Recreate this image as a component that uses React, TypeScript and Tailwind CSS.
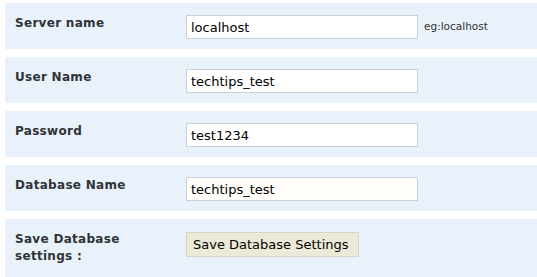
import React from "react";

const font = { fontFamily: '"DejaVu Sans", Verdana, sans-serif' };

function Row({
  label,
  children,
  className = "",
}: {
  label: React.ReactNode;
  children: React.ReactNode;
  className?: string;
}) {
  return (
    <div className={`flex items-start bg-[#e9f1fa] pl-[10px] pt-[12px] ${className}`}>
      <div className="w-[171px] shrink-0">
        <div className="w-[145px] text-[12px] font-bold leading-[17px] tracking-[0.3px] text-[#2f3338]">
          {label}
        </div>
      </div>
      <div className="flex items-center">{children}</div>
    </div>
  );
}

function Input({ value, cream = false }: { value: string; cream?: boolean }) {
  return (
    <input
      readOnly
      value={value}
      className={`h-[24px] w-[232px] border border-[#c9d1d9] px-[4px] text-[13px] text-black outline-none ${
        cream ? "bg-[#fffefa]" : "bg-white"
      }`}
      style={font}
    />
  );
}

export default function App() {
  return (
    <div className="h-[277px] w-[537px] overflow-hidden bg-white pl-[5px] pt-[3px]" style={font}>
      <div className="flex flex-col gap-[8px]">
        <Row label="Server name" className="h-[46px]">
          <Input value="localhost" />
          <span className="ml-[6px] text-[10.5px] text-[#333]">eg:localhost</span>
        </Row>
        <Row label="User Name" className="h-[46px]">
          <Input value="techtips_test" />
        </Row>
        <Row label="Password" className="h-[46px]">
          <Input value="test1234" />
        </Row>
        <Row label="Database Name" className="h-[46px]">
          <Input value="techtips_test" cream />
        </Row>
        <Row label="Save Database settings :" className="h-[62px]">
          <button
            className="mt-[1px] h-[25px] w-[173px] border border-[#d9d6c6] bg-[#ece9d8] text-left pl-[6px] text-[13px] text-black"
            style={font}
          >
            Save Database Settings
          </button>
        </Row>
      </div>
    </div>
  );
}
